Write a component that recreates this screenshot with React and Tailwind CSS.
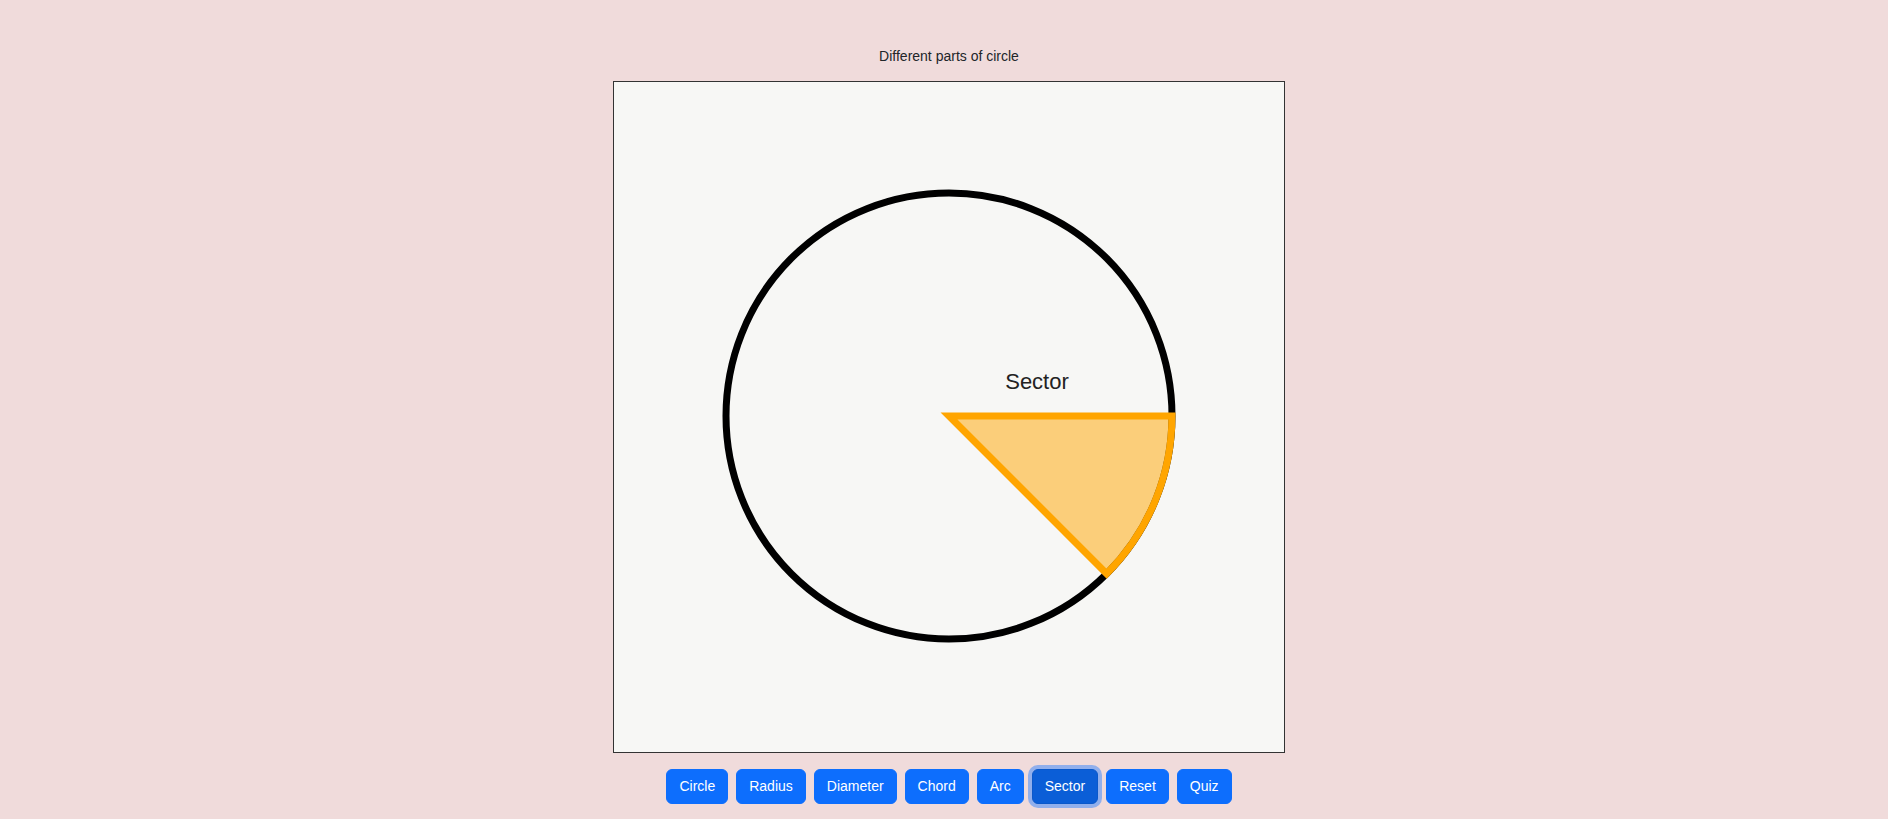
import React, { useState } from "react";

const buttons = ["Circle", "Radius", "Diameter", "Chord", "Arc", "Sector", "Reset", "Quiz"];

// circle geometry inside the 670x670 drawing area
const CX = 335;
const CY = 334;
const R = 223;

function Diagram() {
  const a = Math.PI / 4;
  const ex = CX + R * Math.cos(a);
  const ey = CY + R * Math.sin(a);

  return (
    <svg width="670" height="670" viewBox="0 0 670 670" className="block">
      <circle cx={CX} cy={CY} r={R} fill="none" stroke="#000" strokeWidth="7" />
      {/* sector: 0° to 45° */}
      <path
        d={`M${CX},${CY} L${CX + R},${CY} A${R},${R} 0 0,1 ${ex},${ey} Z`}
        fill="rgba(255,165,0,0.5)"
        stroke="#ffa500"
        strokeWidth="7"
      />
      <text
        x="423"
        y="307"
        textAnchor="middle"
        fontSize="22"
        fill="#222"
        fontFamily="'Liberation Sans', Arial, sans-serif"
      >
        Sector
      </text>
    </svg>
  );
}

export default function App() {
  const [active, setActive] = useState("Sector");

  return (
    <div className="min-h-screen bg-[#f0dbdb] pl-[10px] pt-[46px] font-['Liberation_Sans',Arial,sans-serif] text-[#212529]">
      <div className="flex flex-col items-center">
        {/* Title */}
        <p className="text-[14px] leading-[21px]">Different parts of circle</p>

        {/* Drawing board */}
        <div className="mt-[14px] border border-[#333] bg-[#f7f7f5]">
          <Diagram />
        </div>

        {/* Controls */}
        <div className="mt-4 flex gap-2">
          {buttons.map((b) => (
            <button
              key={b}
              onClick={() => setActive(b)}
              className={
                b === active
                  ? "rounded-md border border-[#0a58ca] bg-[#0b5ed7] px-3 py-[6px] text-[14px] leading-[21px] text-white shadow-[0_0_0_4px_rgba(49,132,253,0.5)]"
                  : "rounded-md border border-[#0d6efd] bg-[#0d6efd] px-3 py-[6px] text-[14px] leading-[21px] text-white hover:bg-[#0b5ed7]"
              }
            >
              {b}
            </button>
          ))}
        </div>
      </div>
    </div>
  );
}
